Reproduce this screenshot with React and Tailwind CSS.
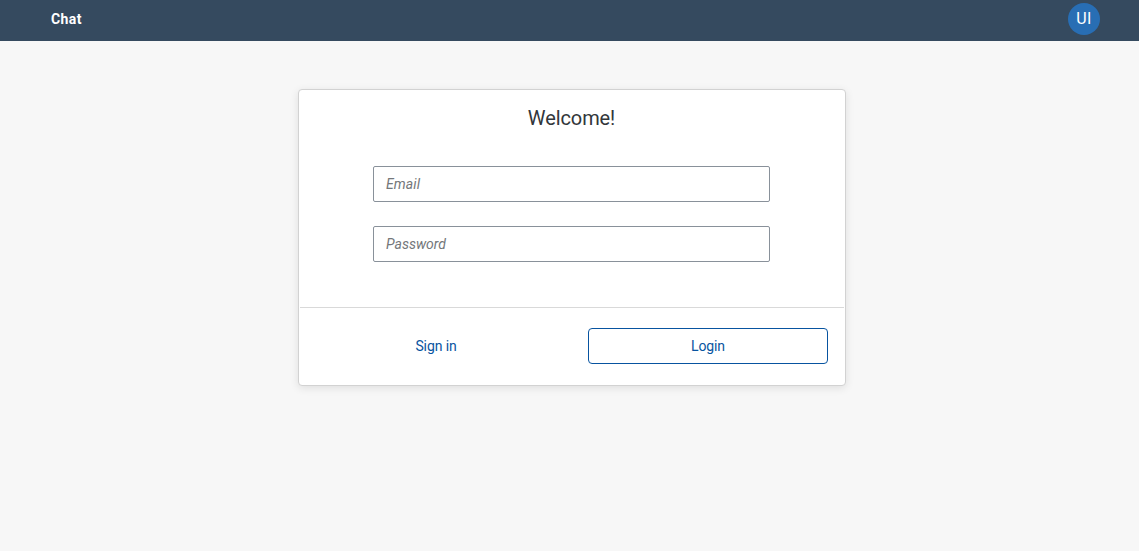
export default function App() {
  return (
    <div className="min-h-screen bg-[#f7f7f7] font-['Roboto',sans-serif]">
      <header className="flex h-[41px] items-center justify-between bg-[#354a5f] pr-[39px] pb-[3px] pl-[51px] text-white">
        <h1 className="text-[14px] leading-5 font-bold tracking-[0.4px]">Chat</h1>
        <div className="flex size-8 items-center justify-center rounded-full bg-[#286eb4] text-base leading-5">
          <span className="mb-px tracking-[0.3px]">UI</span>
        </div>
      </header>
      <main className="flex justify-center pt-12 pl-[5px]">
        <form className="flex h-[297px] w-[548px] flex-col rounded border border-[#d2d2d2] bg-white shadow-[0_2px_8px_rgba(0,0,0,0.1)]">
          <div className="flex flex-col items-center pr-px">
            <h2 className="mt-[14px] text-xl leading-7 tracking-[-0.1px] text-[#32363a]">Welcome!</h2>
            <input type="email" placeholder="Email" className="mt-[34px] h-9 w-[397px] rounded-[2px] border border-[#89919a] px-3 text-sm placeholder:tracking-[0.1px] placeholder:text-[#74777a] placeholder:italic" />
            <input type="password" placeholder="Password" className="mt-6 h-9 w-[397px] rounded-[2px] border border-[#89919a] px-3 text-sm placeholder:text-[#74777a] placeholder:italic" />
          </div>
          <div className="mx-px mt-[45px] flex border-t border-[#d9d9d9] pt-5 pr-4 pl-4 text-sm tracking-[-0.1px] text-[#0854a0]">
            <button type="button" className="h-9 w-60">Sign in</button>
            <button type="button" className="ml-auto h-9 w-60 rounded border border-[#0854a0]">Login</button>
          </div>
        </form>
      </main>
    </div>
  );
}
